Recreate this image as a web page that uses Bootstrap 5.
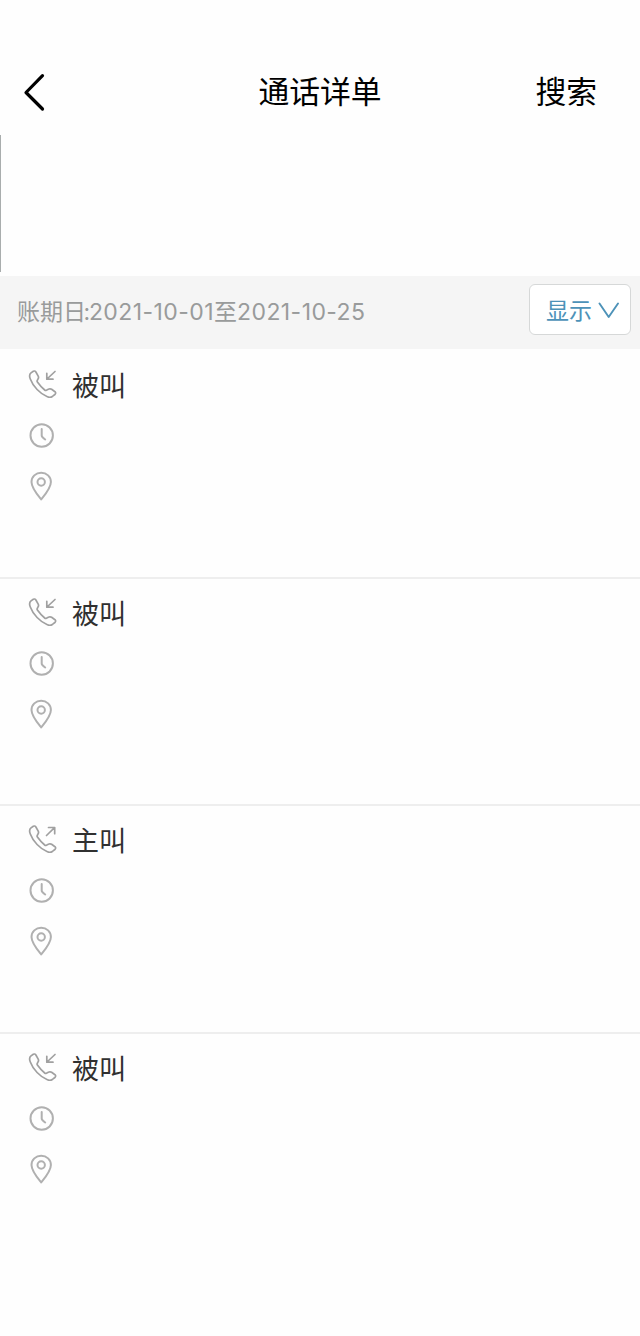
<!DOCTYPE html>
<html lang="zh-CN">
<head>
<meta charset="utf-8">
<meta name="viewport" content="width=device-width, initial-scale=1">
<title>通话详单</title>
<link href="https://cdn.jsdelivr.net/npm/bootstrap@5.3.0/dist/css/bootstrap.min.css" rel="stylesheet">
<style>
body{font-family:"Noto Sans CJK SC",sans-serif;background:#fefefe;color:#000;min-height:1336px;overflow-x:hidden}
svg{display:block;fill:none;stroke-linecap:round;stroke-linejoin:round}
.topbar{height:135px;padding:50px 43px 0 22px;font-size:30.8px;line-height:80px}
.topbar>*{flex:1 1 0}
.topbar h1{font-size:inherit;font-weight:400;line-height:inherit;padding-left:21px}
.blank-panel{height:137px;border-left:1px solid #a9adad;margin-bottom:4px}
.period{height:73px;background:#f5f5f5;color:#999b9b;padding:0 9px 6px 17px;font-size:23px}
.period .dates{padding-top:3px}
.period .num{font-family:Inter,"Noto Sans CJK SC",sans-serif;font-size:23px;letter-spacing:.43px}
.period .colon{margin:0 -1.7px 0 -2.5px}
.show-btn{width:102px;height:51px;padding:0 0 0 16px;background:#fff;border:1px solid #d6d8d8;border-radius:6px;color:#4d92b8;font-size:23px;gap:5px}
.calls{padding-top:2px}
.call{height:227.5px;border-bottom:2px solid #eee;padding:19px 0 0 28px}
.call:last-child{border:0}
.call svg{stroke:#b0b0b0;stroke-width:2}
.call .kind{height:30px;gap:14px;font-size:27px;line-height:30.5px;color:#303030}
.call .kind svg{stroke:#a0a0a0;stroke-width:1.7}
.clock{margin:22px 0 0 1px}
.pin{margin:23px 0 0 1px}
</style>
</head>
<body>
<svg width="0" height="0" class="position-absolute" aria-hidden="true">
<symbol id="phone" viewBox="0 0 30 30"><path d="M5.300 1.300 3 2.900C1.500 4.100 1.300 6.500 2.300 9 5 16.300 12 23.800 19.400 26.800c2 .8 3.800.5 5.300-.6l2.200-1.700c1-.8 1-2 .1-2.800l-3.400-2.400c-.9-.6-1.900-.7-2.800-.2l-2.400 1.100c-.6.3-1.200.2-1.700-.2C14 17.700 11.500 15 9.400 12c-.4-.5-.4-1-.1-1.600l1-2c.4-.8.3-1.500-.1-2.300L7.900 2c-.6-1-1.600-1.300-2.600-.7Z"/></symbol>
</svg>
<header class="topbar d-flex align-items-start">
<a href="#" aria-label="返回"><svg width="26" height="84" viewBox="0 0 26 84" stroke="#000" stroke-width="3.2"><path d="M20.500 25.700 4 42.500l16.500 16.500"/></svg></a>
<h1 class="m-0 text-center text-nowrap">通话详单</h1>
<span class="text-end">搜索</span>
</header>
<div class="blank-panel"></div>
<div class="period d-flex align-items-center justify-content-between">
<span class="dates text-nowrap">账期日<span class="num"><span class="colon">:</span>2021-10-01</span>至<span class="num">2021-10-25</span></span>
<button class="show-btn btn d-flex align-items-center text-nowrap" type="button">显示<svg width="22" height="20" viewBox="0 0 22 20" stroke="currentColor" stroke-width="1.9"><path d="m2.500 3.500 9.200 13.500L21 3.500"/></svg></button>
</div>
<main class="calls" id="calls"></main>
<script src="https://cdn.jsdelivr.net/npm/bootstrap@5.3.0/dist/js/bootstrap.bundle.min.js"></script>
<script>
const arrows = {"被叫": "M27 1.500 19 9M18.800 3.300v5.900h6.200", "主叫": "M18.500 10.500 26.500 2.700M20.500 2.500h6.200v6.200"};
document.getElementById("calls").innerHTML = ["被叫", "被叫", "主叫", "被叫"].map(kind => `
<section class="call">
<div class="kind d-flex"><svg width="30" height="30" viewBox="0 0 30 30"><use href="#phone"/><path d="${arrows[kind]}"/></svg><span>${kind}</span></div>
<svg class="clock" width="26" height="26" viewBox="0 0 26 26"><circle cx="12.700" cy="13.500" r="11.200"/><path d="M12.700 7v6.500c0 1 2 3 3.500 4"/></svg>
<svg class="pin" width="26" height="30" viewBox="0 0 26 30"><path d="M12.200 28.500C9 24.500 2.500 17 2.500 11c0-5.300 4.300-9.300 9.700-9.300s9.700 4 9.700 9.300c0 6-6.500 13.500-9.700 17.500Z"/><circle cx="12.200" cy="11" r="3.700"/></svg>
</section>`).join("");
</script>
</body>
</html>
